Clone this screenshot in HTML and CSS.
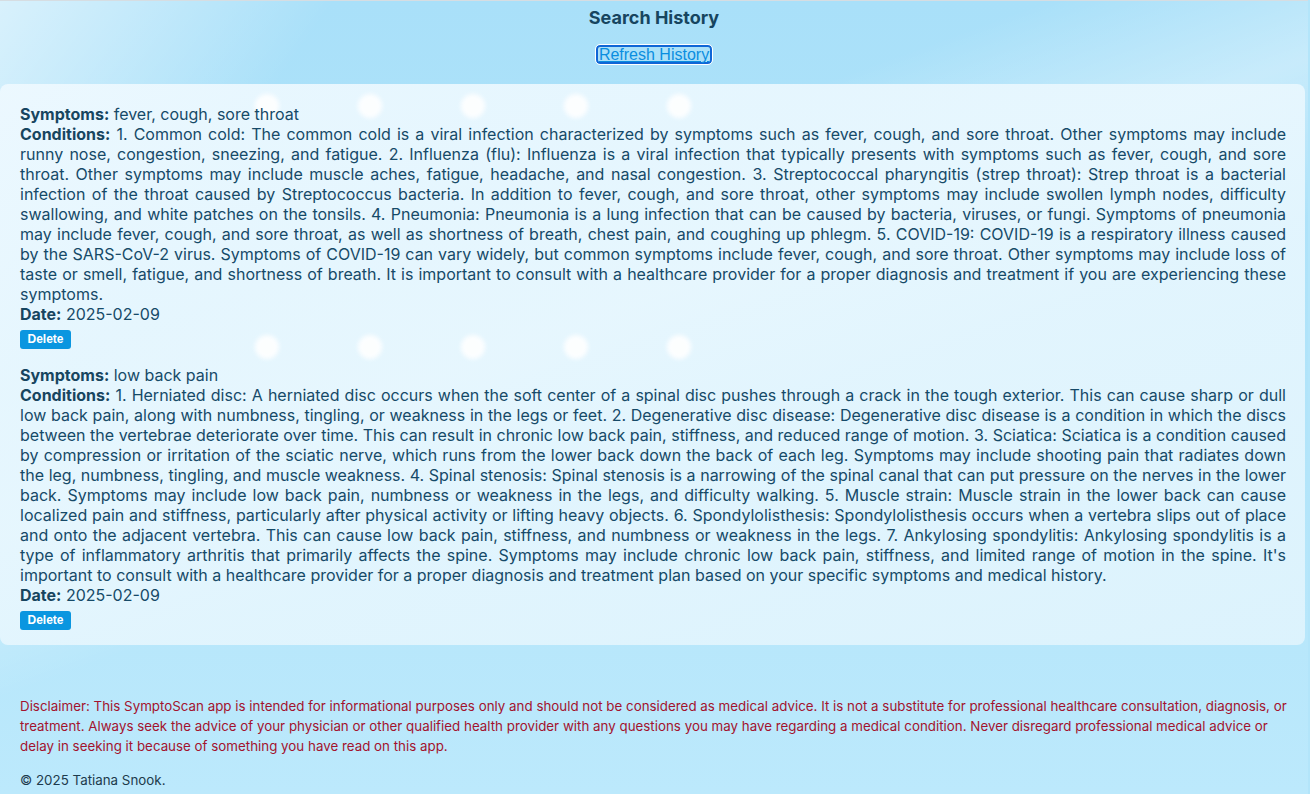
FILE: index.html
```html
<!DOCTYPE html>
<html lang="en">
<head>
<meta charset="utf-8">
<title>SymptoScan - Search History</title>
<link rel="stylesheet" href="styles.css">
</head>
<body>
<div class="page">
  <div class="dots dots-top"><span></span><span></span><span></span><span></span><span></span></div>
  <div class="dots dots-mid"><span></span><span></span><span></span><span></span><span></span></div>
  <header class="head">
    <h2 class="title">Search History</h2>
    <button class="refresh">Refresh History</button>
  </header>
  <main class="card">
    <div class="entry">
      <p class="line"><strong>Symptoms:</strong> fever, cough, sore throat</p>
      <p class="line"><strong>Conditions:</strong> 1. Common cold: The common cold is a viral infection characterized by symptoms such as fever, cough, and sore throat. Other symptoms may include runny nose, congestion, sneezing, and fatigue. 2. Influenza (flu): Influenza is a viral infection that typically presents with symptoms such as fever, cough, and sore throat. Other symptoms may include muscle aches, fatigue, headache, and nasal congestion. 3. Streptococcal pharyngitis (strep throat): Strep throat is a bacterial infection of the throat caused by Streptococcus bacteria. In addition to fever, cough, and sore throat, other symptoms may include swollen lymph nodes, difficulty swallowing, and white patches on the tonsils. 4. Pneumonia: Pneumonia is a lung infection that can be caused by bacteria, viruses, or fungi. Symptoms of pneumonia may include fever, cough, and sore throat, as well as shortness of breath, chest pain, and coughing up phlegm. 5. COVID-19: COVID-19 is a respiratory illness caused by the SARS-CoV-2 virus. Symptoms of COVID-19 can vary widely, but common symptoms include fever, cough, and sore throat. Other symptoms may include loss of taste or smell, fatigue, and shortness of breath. It is important to consult with a healthcare provider for a proper diagnosis and treatment if you are experiencing these symptoms.</p>
      <p class="line"><strong>Date:</strong> 2025-02-09</p>
      <button class="delete">Delete</button>
    </div>
    <div class="entry">
      <p class="line"><strong>Symptoms:</strong> low back pain</p>
      <p class="line"><strong>Conditions:</strong> 1. Herniated disc: A herniated disc occurs when the soft center of a spinal disc pushes through a crack in the tough exterior. This can cause sharp or dull low back pain, along with numbness, tingling, or weakness in the legs or feet. 2. Degenerative disc disease: Degenerative disc disease is a condition in which the discs between the vertebrae deteriorate over time. This can result in chronic low back pain, stiffness, and reduced range of motion. 3. Sciatica: Sciatica is a condition caused by compression or irritation of the sciatic nerve, which runs from the lower back down the back of each leg. Symptoms may include shooting pain that radiates down the leg, numbness, tingling, and muscle weakness. 4. Spinal stenosis: Spinal stenosis is a narrowing of the spinal canal that can put pressure on the nerves in the lower back. Symptoms may include low back pain, numbness or weakness in the legs, and difficulty walking. 5. Muscle strain: Muscle strain in the lower back can cause localized pain and stiffness, particularly after physical activity or lifting heavy objects. 6. Spondylolisthesis: Spondylolisthesis occurs when a vertebra slips out of place and onto the adjacent vertebra. This can cause low back pain, stiffness, and numbness or weakness in the legs. 7. Ankylosing spondylitis: Ankylosing spondylitis is a type of inflammatory arthritis that primarily affects the spine. Symptoms may include chronic low back pain, stiffness, and limited range of motion in the spine. It's important to consult with a healthcare provider for a proper diagnosis and treatment plan based on your specific symptoms and medical history.</p>
      <p class="line"><strong>Date:</strong> 2025-02-09</p>
      <button class="delete">Delete</button>
    </div>
  </main>
  <footer class="foot">
    <p class="disclaimer">Disclaimer: This SymptoScan app is intended for informational purposes only and should not be considered as medical advice. It is not a substitute for professional healthcare consultation, diagnosis, or treatment. Always seek the advice of your physician or other qualified health provider with any questions you may have regarding a medical condition. Never disregard professional medical advice or delay in seeking it because of something you have read on this app.</p>
    <p class="copy">© 2025 Tatiana Snook.</p>
  </footer>
</div>
</body>
</html>
```

FILE: styles.css
```css
* { box-sizing: border-box; }
html, body { margin: 0; padding: 0; }
body {
  width: 1310px;
  height: 794px;
  overflow: hidden;
  font-family: Inter, "Noto Sans", sans-serif;
  color: #164a68;
  background: #b3e5fa;
}
.page {
  position: relative;
  width: 1308px;
  height: 794px;
  border-top: 1px solid #d6dde2;
  background:
    linear-gradient(160deg, rgba(255,255,255,0) 30%, rgba(255,255,255,0.35) 42%, rgba(255,255,255,0) 55%),
    linear-gradient(125deg, rgba(255,255,255,0.55) 0%, rgba(255,255,255,0) 18%),
    linear-gradient(180deg, #a9e0f9 0%, #b3e5fa 60%, #bce9fc 100%);
  display: flex;
  flex-direction: column;
}
.dots {
  position: absolute;
  left: 255px;
  display: flex;
  gap: 79px;
  z-index: 2;
  pointer-events: none;
}
.dots span {
  width: 24px;
  height: 24px;
  border-radius: 50%;
  background: #ffffff;
  filter: blur(2px);
  opacity: 0.9;
}
.dots-top { top: 93px; }
.dots-mid { top: 334px; }
.head {
  display: flex;
  flex-direction: column;
  align-items: center;
  padding-top: 6px;
  height: 83px;
}
.title {
  margin: 0;
  font-size: 18px;
  line-height: 22px;
  font-weight: 700;
  color: #17455f;
}
.refresh {
  margin-top: 16px;
  font-family: "Liberation Sans", Arial, sans-serif;
  font-size: 16px;
  line-height: 15px;
  white-space: nowrap;
  color: #0a8ee0;
  text-decoration: underline;
  background: transparent;
  border: 2px solid #1066d6;
  outline: 1px solid #ffffff;
  border-radius: 4px;
  padding: 0 1px;
  height: 19px;
  cursor: pointer;
}
.card {
  position: relative;
  width: 1305px;
  background: linear-gradient(165deg, rgba(238,249,255,0.92) 0%, rgba(232,247,254,0.9) 50%, rgba(224,244,253,0.9) 100%);
  border-radius: 8px;
  padding: 20px 19px 15px 20px;
  display: flex;
  flex-direction: column;
  gap: 16px;
}
.entry {
  position: relative;
  z-index: 3;
  display: flex;
  flex-direction: column;
}
.line {
  margin: 0;
  font-size: 16px;
  line-height: 20px;
  text-align: justify;
  color: #164a68;
}
.line strong { font-weight: 700; color: #17455f; }
.delete {
  align-self: flex-start;
  margin-top: 6px;
  font-family: "Liberation Sans", Arial, sans-serif;
  font-size: 12px;
  line-height: 15px;
  font-weight: 600;
  color: #ffffff;
  background: #0a96e0;
  border: none;
  border-radius: 3px;
  padding: 2px 6px 2px;
  width: 51px;
  height: 19px;
}
.foot {
  padding: 51px 20px 0 20px;
}
.disclaimer {
  margin: 0;
  font-size: 13.35px;
  line-height: 20px;
  color: #a3132e;
}
.copy {
  margin: 14px 0 0;
  font-size: 13.35px;
  line-height: 20px;
  color: #1d3b4c;
}
```
